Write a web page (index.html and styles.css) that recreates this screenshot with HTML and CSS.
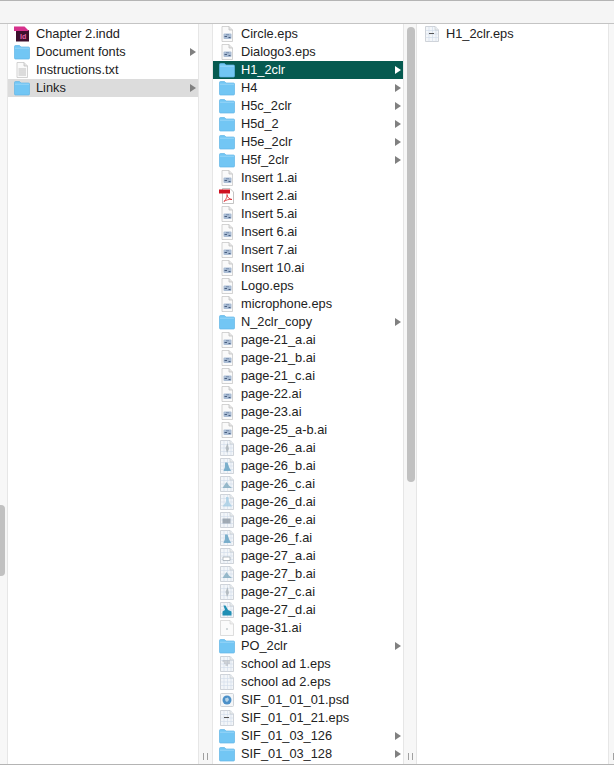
FILE: index.html
```html
<!DOCTYPE html>
<html lang="en">
<head>
  <meta charset="UTF-8">
  <title>Links</title>
  <link rel="stylesheet" href="styles.css">
</head>
<body>
  <svg class="icon-defs" xmlns="http://www.w3.org/2000/svg">
    <symbol id="folder" viewBox="0 0 16 16">
      <path d="M.5 2.500Q.5 1.500 1.500 1.500H5.500L7 3H14.500Q15.500 3 15.500 4V14Q15.500 15 14.500 15H1.500Q.5 15 .5 14Z" fill="#72c6f4" stroke="#62b6e6" stroke-width=".7"/>
      <path d="M1 4.200H15" stroke="#a4dcfa" stroke-width=".8"/>
    </symbol>
    <symbol id="page" viewBox="0 0 16 16">
      <path d="M3 .5H10L13.500 4V15.500H3Z" fill="#fafafa" stroke="#c8c8c8" stroke-width=".8"/>
      <path d="M10 .5V4H13.500" fill="#e4e4e4" stroke="#c0c0c0" stroke-width=".8"/>
    </symbol>
    <symbol id="eps" viewBox="0 0 16 16">
      <use href="#page"/>
      <rect x="4.500" y="7.500" width="8" height="5.500" rx="1" fill="#a9bcd4"/>
      <path d="M5.500 10.500H8M9.500 11.500H11.500" stroke="#4a5f80" stroke-width="1"/>
      <path d="M7 8.700H10" stroke="#7088aa" stroke-width=".8"/>
    </symbol>
    <symbol id="grid" viewBox="0 0 16 16">
      <path d="M1.500 .5H11L14.500 4V15.500H1.500Z" fill="#f3f6f9" stroke="#c4c9cf" stroke-width=".8"/>
      <path d="M1.500 4.500H14.500M1.500 8H14.500M1.500 11.500H14.500M5 .5V15.500M8.500 .5V15.500M12 .5V15.500" stroke="#d0dcea" stroke-width=".6"/>
      <path d="M11 .5V4H14.500" fill="#e8ebee" stroke="#c4c9cf" stroke-width=".6"/>
    </symbol>
    <symbol id="thumb-a" viewBox="0 0 16 16">
      <use href="#grid"/>
      <path d="M8.500 3L10 9L8 13L6.500 8Z" fill="#a8b0b5" fill-opacity=".8"/>
    </symbol>
    <symbol id="thumb-b" viewBox="0 0 16 16">
      <use href="#grid"/>
      <path d="M6 4.500H8.500L10 9L12 13H4.500L6 9Z" fill="#5f9fc0" fill-opacity=".8"/>
    </symbol>
    <symbol id="thumb-c" viewBox="0 0 16 16">
      <use href="#grid"/>
      <path d="M3.500 12L7.500 6L10 9.500L13 12Z" fill="#7faabf" fill-opacity=".8"/>
    </symbol>
    <symbol id="thumb-d" viewBox="0 0 16 16">
      <use href="#grid"/>
      <path d="M7 3H9.500L10 8L13 12.500H3.500L7 8Z" fill="#a5cde4" fill-opacity=".8"/>
    </symbol>
    <symbol id="thumb-e" viewBox="0 0 16 16">
      <use href="#grid"/>
      <rect x="3.500" y="6.500" width="8" height="5" fill="#8d99a4" fill-opacity=".8"/>
    </symbol>
    <symbol id="thumb-f" viewBox="0 0 16 16">
      <use href="#grid"/>
      <path d="M3.500 13.500H12.500V9.500L9 8L6.500 3.500H4.500L6 8L3.500 9.500Z" fill="#1f8fb4"/>
    </symbol>
    <symbol id="thumb-g" viewBox="0 0 16 16">
      <use href="#grid"/>
      <path d="M4 9H11V12.500H4Z" fill="#fff" stroke="#a4adb5" stroke-width=".8"/>
    </symbol>
    <symbol id="thumb-h" viewBox="0 0 16 16">
      <use href="#grid"/>
      <path d="M5 7.500H10" stroke="#555" stroke-width="1"/>
    </symbol>
    <symbol id="thumb-i" viewBox="0 0 16 16">
      <use href="#grid"/>
      <path d="M3.500 5H11M5 7H11M6.500 9H9" stroke="#a9aeb3" stroke-width="1.200"/>
    </symbol>
    <symbol id="thumb-j" viewBox="0 0 16 16">
      <path d="M1.500 .5H11L14.500 4V15.500H1.500Z" fill="#fbfbfb" stroke="#d4d4d4" stroke-width=".8"/>
      <path d="M11 .5V4H14.500" fill="#eee" stroke="#d4d4d4" stroke-width=".6"/>
      <path d="M7 9H9" stroke="#a8b4b8" stroke-width="1"/>
    </symbol>
    <symbol id="pdf" viewBox="0 0 16 16">
      <path d="M3.500 .5H11L14.500 4V15.500H3.500Z" fill="#fff" stroke="#b5b5b5" stroke-width=".8"/>
      <rect x="0" y="1.500" width="11" height="4" fill="#cf1020"/>
      <path d="M5 13.500C7.500 11 8.500 8 8 6.500C8 9 10 11 13 11.500C10 11 7 12 5 13.500Z" fill="none" stroke="#d8232a" stroke-width=".8"/>
    </symbol>
    <symbol id="indd" viewBox="0 0 16 16">
      <path d="M2 4H15V15.500H2Z" fill="#3d0f2d"/>
      <path d="M0 .5H10.500L15 5H0Z" fill="#d6318c"/>
      <text x="6" y="13" font-family="Liberation Sans, sans-serif" font-size="7" font-weight="700" fill="#e463a8">Id</text>
    </symbol>
    <symbol id="txt" viewBox="0 0 16 16">
      <use href="#page"/>
      <path d="M4.500 7H12M4.500 9H12M4.500 11H12M4.500 13H12" stroke="#bdbdbd" stroke-width="1"/>
    </symbol>
    <symbol id="psd" viewBox="0 0 16 16">
      <rect x="1.500" y="1.500" width="13" height="13" rx="1" fill="#f4f6f8" stroke="#c4c9cf" stroke-width=".8"/>
      <circle cx="8" cy="8" r="4.500" fill="#4c90c8"/>
      <path d="M6 6.500L9 5.500L10 8L8 10L6.500 9Z" fill="#b4d2e8"/>
    </symbol>
  </svg>

  <div class="toolbar"></div>

  <main class="browser">
    <div class="scrollbar scrollbar-left">
      <div class="thumb thumb-left"></div>
    </div>

    <ul class="column">
      <li class="row"><svg class="icon"><use href="#indd"/></svg><span class="name">Chapter 2.indd</span></li>
      <li class="row has-arrow"><svg class="icon"><use href="#folder"/></svg><span class="name">Document fonts</span></li>
      <li class="row"><svg class="icon"><use href="#txt"/></svg><span class="name">Instructions.txt</span></li>
      <li class="row has-arrow row-inactive"><svg class="icon"><use href="#folder"/></svg><span class="name">Links</span></li>
    </ul>
    <div class="scrollbar scrollbar-wide">
      <div class="handle"></div>
    </div>

    <ul class="column">
      <li class="row"><svg class="icon"><use href="#eps"/></svg><span class="name">Circle.eps</span></li>
      <li class="row"><svg class="icon"><use href="#eps"/></svg><span class="name">Dialogo3.eps</span></li>
      <li class="row has-arrow row-active"><svg class="icon"><use href="#folder"/></svg><span class="name">H1_2clr</span></li>
      <li class="row has-arrow"><svg class="icon"><use href="#folder"/></svg><span class="name">H4</span></li>
      <li class="row has-arrow"><svg class="icon"><use href="#folder"/></svg><span class="name">H5c_2clr</span></li>
      <li class="row has-arrow"><svg class="icon"><use href="#folder"/></svg><span class="name">H5d_2</span></li>
      <li class="row has-arrow"><svg class="icon"><use href="#folder"/></svg><span class="name">H5e_2clr</span></li>
      <li class="row has-arrow"><svg class="icon"><use href="#folder"/></svg><span class="name">H5f_2clr</span></li>
      <li class="row"><svg class="icon"><use href="#eps"/></svg><span class="name">Insert 1.ai</span></li>
      <li class="row"><svg class="icon"><use href="#pdf"/></svg><span class="name">Insert 2.ai</span></li>
      <li class="row"><svg class="icon"><use href="#eps"/></svg><span class="name">Insert 5.ai</span></li>
      <li class="row"><svg class="icon"><use href="#eps"/></svg><span class="name">Insert 6.ai</span></li>
      <li class="row"><svg class="icon"><use href="#eps"/></svg><span class="name">Insert 7.ai</span></li>
      <li class="row"><svg class="icon"><use href="#eps"/></svg><span class="name">Insert 10.ai</span></li>
      <li class="row"><svg class="icon"><use href="#eps"/></svg><span class="name">Logo.eps</span></li>
      <li class="row"><svg class="icon"><use href="#eps"/></svg><span class="name">microphone.eps</span></li>
      <li class="row has-arrow"><svg class="icon"><use href="#folder"/></svg><span class="name">N_2clr_copy</span></li>
      <li class="row"><svg class="icon"><use href="#eps"/></svg><span class="name">page-21_a.ai</span></li>
      <li class="row"><svg class="icon"><use href="#eps"/></svg><span class="name">page-21_b.ai</span></li>
      <li class="row"><svg class="icon"><use href="#eps"/></svg><span class="name">page-21_c.ai</span></li>
      <li class="row"><svg class="icon"><use href="#eps"/></svg><span class="name">page-22.ai</span></li>
      <li class="row"><svg class="icon"><use href="#eps"/></svg><span class="name">page-23.ai</span></li>
      <li class="row"><svg class="icon"><use href="#eps"/></svg><span class="name">page-25_a-b.ai</span></li>
      <li class="row"><svg class="icon"><use href="#thumb-a"/></svg><span class="name">page-26_a.ai</span></li>
      <li class="row"><svg class="icon"><use href="#thumb-b"/></svg><span class="name">page-26_b.ai</span></li>
      <li class="row"><svg class="icon"><use href="#thumb-c"/></svg><span class="name">page-26_c.ai</span></li>
      <li class="row"><svg class="icon"><use href="#thumb-d"/></svg><span class="name">page-26_d.ai</span></li>
      <li class="row"><svg class="icon"><use href="#thumb-e"/></svg><span class="name">page-26_e.ai</span></li>
      <li class="row"><svg class="icon"><use href="#thumb-b"/></svg><span class="name">page-26_f.ai</span></li>
      <li class="row"><svg class="icon"><use href="#thumb-g"/></svg><span class="name">page-27_a.ai</span></li>
      <li class="row"><svg class="icon"><use href="#thumb-c"/></svg><span class="name">page-27_b.ai</span></li>
      <li class="row"><svg class="icon"><use href="#thumb-a"/></svg><span class="name">page-27_c.ai</span></li>
      <li class="row"><svg class="icon"><use href="#thumb-f"/></svg><span class="name">page-27_d.ai</span></li>
      <li class="row"><svg class="icon"><use href="#thumb-j"/></svg><span class="name">page-31.ai</span></li>
      <li class="row has-arrow"><svg class="icon"><use href="#folder"/></svg><span class="name">PO_2clr</span></li>
      <li class="row"><svg class="icon"><use href="#thumb-i"/></svg><span class="name">school ad 1.eps</span></li>
      <li class="row"><svg class="icon"><use href="#grid"/></svg><span class="name">school ad 2.eps</span></li>
      <li class="row"><svg class="icon"><use href="#psd"/></svg><span class="name">SIF_01_01_01.psd</span></li>
      <li class="row"><svg class="icon"><use href="#thumb-h"/></svg><span class="name">SIF_01_01_21.eps</span></li>
      <li class="row has-arrow"><svg class="icon"><use href="#folder"/></svg><span class="name">SIF_01_03_126</span></li>
      <li class="row has-arrow"><svg class="icon"><use href="#folder"/></svg><span class="name">SIF_01_03_128</span></li>
      <li class="row"><svg class="icon"><use href="#grid"/></svg></li>
    </ul>
    <div class="scrollbar">
      <div class="thumb thumb-list"></div>
      <div class="handle"></div>
    </div>

    <ul class="column column-last">
      <li class="row"><svg class="icon"><use href="#thumb-h"/></svg><span class="name">H1_2clr.eps</span></li>
    </ul>
    <div class="scrollbar scrollbar-right">
      <div class="handle"></div>
    </div>
  </main>
</body>
</html>
```

FILE: styles.css
```css
* {
  margin: 0;
  padding: 0;
  box-sizing: border-box;
}
body {
  height: 100vh;
  overflow: hidden;
  background-color: #fff;
  font-family: "Liberation Sans", Arial, sans-serif;
  font-size: 12.8px;
  color: #222;
}
.icon-defs {
  display: none;
}
.toolbar {
  height: 24px;
  background-color: #f5f5f5;
  border-top: 1px solid #b4b4b4;
  border-bottom: 1px solid #c4c4c4;
}
.browser {
  display: flex;
  height: 741px;
  overflow: hidden;
  border-bottom: 1px solid #b4b4b4;
}
.column {
  flex: 0 0 190px;
  list-style: none;
  padding-top: 1px;
  overflow: hidden;
}
.column-last {
  flex: 0 0 191px;
}
.row {
  position: relative;
  display: flex;
  align-items: center;
  height: 18px;
  padding-left: 6px;
  white-space: nowrap;
}
.column-last .row {
  padding-left: 7px;
}
.icon {
  flex: none;
  width: 16px;
  height: 16px;
  margin-right: 6px;
}
.name {
  margin-bottom: 2px;
}
.has-arrow::after {
  content: "";
  position: absolute;
  right: 2px;
  top: 5px;
  border-left: 6px solid #808080;
  border-top: 4px solid transparent;
  border-bottom: 4px solid transparent;
}
.row-inactive {
  background-color: #dcdcdc;
}
.row-active {
  background-color: #055a50;
  color: #fff;
}
.row-active::after {
  border-left-color: #fff;
}
.scrollbar {
  flex: 0 0 14px;
  display: flex;
  flex-direction: column;
  align-items: center;
  background-color: #f7f7f7;
  border-left: 1px solid #e6e6e6;
  border-right: 1px solid #e6e6e6;
}
.scrollbar-wide {
  flex: 0 0 15px;
}
.scrollbar-left {
  flex: 0 0 8px;
  align-items: flex-start;
  border-left: 0;
}
.scrollbar-right {
  flex: 0 0 6px;
  align-items: flex-start;
  border-right: 0;
}
.thumb {
  flex: none;
  background-color: #c1c1c1;
  border-radius: 4px;
}
.thumb-left {
  width: 5px;
  height: 71px;
  margin-top: 481px;
  border-radius: 0 4px 4px 0;
}
.thumb-list {
  width: 8px;
  height: 455px;
  margin-top: 3px;
  margin-left: 2px;
}
.handle {
  flex: none;
  width: 5px;
  height: 7px;
  margin-top: auto;
  margin-bottom: 4px;
  border-left: 1px solid #a0a0a0;
  border-right: 1px solid #a0a0a0;
}
.scrollbar-right .handle {
  margin-left: 4px;
}
```
